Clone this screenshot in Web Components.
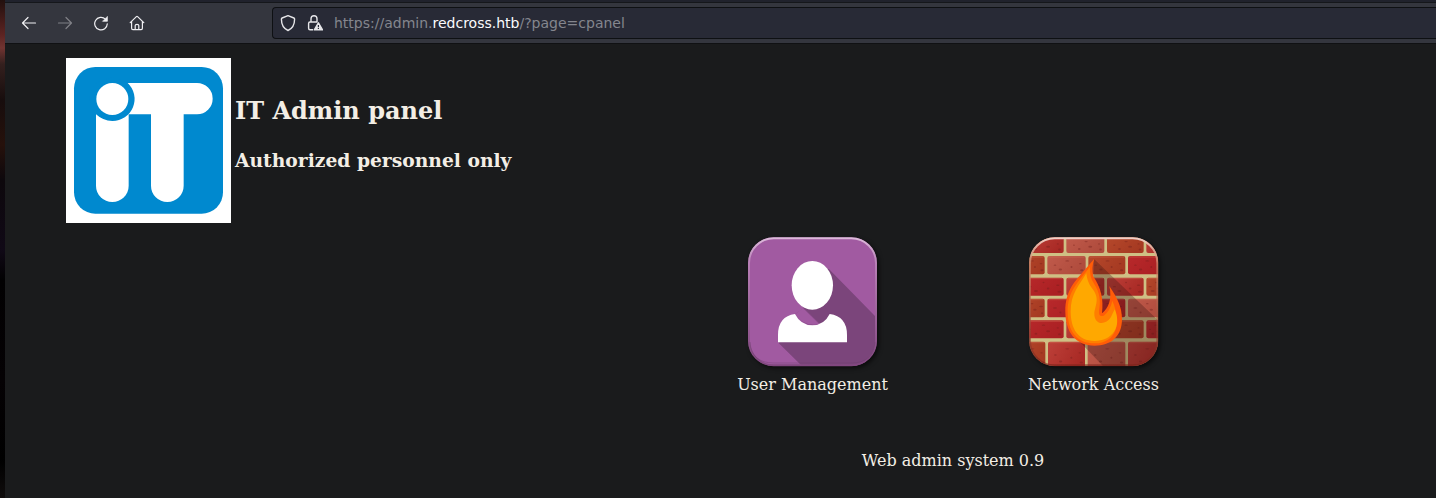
<!DOCTYPE html>
<html lang="en">
<head>
<meta charset="utf-8">
<title>IT Admin panel</title>
<style>
html,body{margin:0;height:100%;background:#1a1b1c;overflow:hidden}
</style>
</head>
<body>
<admin-window></admin-window>
<script>
const define = (name, html) => customElements.define(name, class extends HTMLElement {
  constructor() {
    super();
    const t = document.createElement('template');
    t.innerHTML = html;
    this.attachShadow({mode: 'open'}).append(t.content.cloneNode(true));
  }
});

define('nav-icons', `
<style>
:host{display:flex;gap:20px;width:251px;padding-left:16px;flex:none;align-items:center;box-sizing:content-box}
svg{width:16px;height:16px;flex:none;fill:none;stroke:#f0f0f3;stroke-width:1.2;stroke-linecap:round;stroke-linejoin:round}
.off{opacity:.4}
</style>
<svg viewBox="0 0 16 16"><path d="M7 2.5 1.5 8 7 13.5M1.7 8H14.5"/></svg>
<svg class="off" viewBox="0 0 16 16"><path d="M9 2.5 14.5 8 9 13.5M14.3 8H1.5"/></svg>
<svg viewBox="0 0 16 16"><path d="M12.4 4.1A6.3 6.3 0 1 0 14.3 8.8"/><path d="M14.4 1.8V6.3H9.9Z" fill="#f0f0f3" stroke-width=".7"/></svg>
<svg viewBox="0 0 16 16"><path d="M1.2 7.6 7.4 1.6Q8 1.1 8.6 1.6L14.8 7.6M2.6 6.6V13.3Q2.6 14.6 3.9 14.6H12.1Q13.4 14.6 13.4 13.3V6.6M6.2 14.4V10.6Q6.2 9.3 8 9.3T9.8 10.6V14.4"/></svg>
`);

define('address-field', `
<style>
:host{display:flex;flex:1;height:30px;align-items:center;background:#282a36;border:1px solid #0e1013;border-right:0;border-radius:4px 0 0 4px;padding-left:7px;font:14px/20px "DejaVu Sans",sans-serif;color:#84868e;white-space:pre}
svg{width:16px;height:18px;margin-right:11px;flex:none;fill:none;stroke:#e6e6e9;stroke-width:1.4;stroke-linejoin:round}
svg+svg{margin-right:11px}
b{font-weight:400;color:#fbfbfe}
</style>
<svg viewBox="0 0 16 18"><path d="M8 1.6 13.9 4Q14.6 4.3 14.6 5.1C14.6 11 12.3 14.7 8 16.5 3.7 14.7 1.4 11 1.4 5.1Q1.4 4.3 2.1 4Z"/></svg>
<svg viewBox="0 0 16 18"><path d="M4 8V4.8Q4 1.7 7 1.7T10 4.8V8M6 15.7H3Q1.6 15.7 1.6 14.2V9.5Q1.6 8 3 8H10.5"/><path d="M11.4 8.8 7.3 15.9H15.5Z" fill="#e6e6e9"/><path d="M11.4 11V13.2M11.4 14.1V15.1" stroke="#282a36" stroke-width="1.2"/></svg>
<span>https://admin.<b>redcross.htb</b>/?page=cpanel</span>
`);

define('browser-bar', `
<style>
:host{display:flex;box-sizing:border-box;height:44px;padding-top:4px;align-items:center;padding-bottom:2px;background:linear-gradient(#20222c 0 2px,#15171b 2px 3px,#34363e 3px 43px,#101113 43px)}
</style>
<nav-icons></nav-icons><address-field></address-field>
`);

define('it-logo', `
<style>:host{display:block;width:165px;height:165px;background:#fff;flex:none}svg{display:block}</style>
<svg width="165" height="165" viewBox="18 24 495 495">
<rect x="42" y="51" width="447" height="440" rx="64" fill="#0089cf"/>
<g fill="#fff">
<path d="M180 99H411A47 47 0 0 1 411 193H371V407A49 49 0 0 1 273 407V193H180Z"/>
<path d="M108 180H206V407A49 49 0 0 1 108 407Z"/></g>
<path d="M108 193 A67 67 0 0 1 108 100 L157 80 203 99 A66 66 0 0 1 157 213 Q128 212 108 193Z" fill="#0089cf"/>
<circle cx="157" cy="147" r="48" fill="#fff"/>
</svg>
`);

define('page-heading', `
<style>
:host{display:flex;gap:4px;padding:14px 0 0 61px;height:165px}
h1,h2{margin:0;font-weight:700;white-space:nowrap}
h1{font-size:24px;line-height:28px;margin-top:39px}
h2{font-size:18.72px;line-height:22px;margin-top:24px}
</style>
<it-logo></it-logo><div><h1><slot name="title"></slot></h1><h2><slot name="subtitle"></slot></h2></div>
`);

define('menu-tile', `
<style>
:host{display:block;width:281px;text-align:center;font-size:16px;line-height:19px}
.icon{height:140px;margin-left:70px;width:140px}
.label{margin-top:5px}
</style>
<div class="icon"><slot name="icon"></slot></div><div class="label"><slot></slot></div>
`);

define('user-icon', `
<style>:host,svg{display:block}svg{filter:drop-shadow(2px 2px 2px #0009)}</style>
<svg width="140" height="140" viewBox="36 -1 420 420">
<defs><clipPath id="c"><rect x="55" y="21" width="385" height="386" rx="76"/></clipPath>
<linearGradient id="e" x1="0" y1="0" x2="0" y2="1"><stop stop-color="#dcb9da"/><stop offset=".2" stop-color="#b77fb5"/><stop offset="1" stop-color="#81477f"/></linearGradient></defs>
<g clip-path="url(#c)">
<rect x="55" y="21" width="385" height="386" fill="#a15aa1"/>
<path d="M296 115 440 262V407H216L145 337 270 280 215 226Z" fill="#7b457b"/>
<path d="M222 233 268 279Q240 290 219 275L196 251Z" fill="#7b457b"/>
<path d="M196 251 219 233 268 281Q222 292 196 251Z" fill="#a15aa1"/>
<path d="M222 233 268 279Q286 273 298 251L280 220Z" fill="#7b457b"/>
</g>
<rect x="57" y="24" width="381" height="381" rx="74" fill="none" stroke="url(#e)" stroke-width="6"/>
<path d="M60 335Q64 398 132 398H364Q430 398 435 335" fill="none" stroke="#693c69" stroke-opacity=".4" stroke-width="3"/>
<ellipse cx="247" cy="165" rx="62" ry="73" fill="#fff"/>
<path d="M144 336V314Q144 258 195 251Q212 285 247 285T299 251Q351 258 351 314V336Z" fill="#fff"/>
</svg>
`);

/* Brick courses: top, height, then x positions of the brick edges. */
const courses = [
  [21, 47, [20, 146, 268, 386, 450]], [77, 55, [10, 89, 212, 331, 450]],
  [142, 54, [20, 146, 268, 386, 450]], [205, 56, [10, 89, 212, 331, 450]],
  [270, 54, [20, 146, 268, 386, 450]], [334, 80, [10, 91, 210, 331, 450]]
];
const tones = [
  ['b','p','o','b'], ['o','p','o','r'], ['r','b','b','o'],
  ['o','r','r','p'], ['r','b','o','r'], ['o','b','p','b']
];
let bricks = '', specks = '';
courses.forEach(([y, h, xs], r) => {
  for (let i = 0; i < xs.length - 1; i++) {
    const x = xs[i] + (i ? 8 : 0), w = xs[i + 1] - x;
    bricks += `<rect x="${x}" y="${y}" width="${w}" height="${h}" rx="6" fill="url(#${tones[r][i]})"/>`;
    bricks += `<path d="M${x + 4} ${y + 3}h${w - 8}" stroke="#df8467" stroke-opacity=".5" stroke-width="2"/>`;
    [[.2,.5],[.34,.74],[.52,.27],[.63,.6],[.86,.42],[.9,.78]].forEach(([a, b], k) => {
      specks += `<ellipse cx="${x + w * a}" cy="${y + h * b}" rx="${3 + (k + r) % 4}" ry="${2 + k % 2}"/>`;
    });
  }
});
define('firewall-icon', `
<style>:host,svg{display:block}svg{filter:drop-shadow(2px 2px 2px #0009)}</style>
<svg width="140" height="140" viewBox="24 -1 420 420">
<defs><clipPath id="c"><rect x="43" y="21" width="386" height="386" rx="76"/></clipPath>
<linearGradient id="r" x2="1" y2=".5"><stop stop-color="#b8292b"/><stop offset="1" stop-color="#ab2023"/></linearGradient>
<linearGradient id="b" x2="1" y2=".4"><stop stop-color="#bd4039"/><stop offset="1" stop-color="#a92a25"/></linearGradient>
<linearGradient id="o" x2="1" y2=".4"><stop stop-color="#b5482b"/><stop offset="1" stop-color="#a63a22"/></linearGradient>
<linearGradient id="p" x2="1" y2=".4"><stop stop-color="#c05a4b"/><stop offset="1" stop-color="#b04c3d"/></linearGradient>
<linearGradient id="e" x1="0" y1="0" x2="0" y2="1"><stop stop-color="#f0cfc6"/><stop offset=".2" stop-color="#d18e70" stop-opacity=".7"/><stop offset="1" stop-color="#782018" stop-opacity=".6"/></linearGradient></defs>
<g clip-path="url(#c)"><rect x="43" y="21" width="386" height="386" fill="#cfc084"/>
${bricks}<g fill="#701f1b" fill-opacity=".4">${specks}</g>
<path d="M237 86 429 270V407H264L190 330 230 270Z" fill="#3b1713" fill-opacity=".32"/></g>
<rect x="45" y="24" width="382" height="381" rx="74" fill="none" stroke="url(#e)" stroke-width="6"/>
<path d="M238 85Q228 112 235 138C258 174 266 205 261 249C280 234 292 207 283 167C306 202 321 229 321 266C321 320 286 346 239 346C181 346 151 303 151 244C151 179 181 152 209 119Q224 101 238 85Z" fill="#ff5c08"/>
<path d="M225 109Q223 138 236 158C256 188 257 214 252 241Q250 261 266 256Q286 241 292 211C322 280 304 338 239 339C186 339 158 302 158 244C158 181 190 155 225 109Z" fill="#ff7e00"/>
<path d="M214 129Q216 155 231 174C255 203 242 223 238 247C236 283 270 288 288 260Q296 243 299 237C322 290 291 332 239 332C188 332 167 294 167 243C167 190 192 166 214 129Z" fill="#ffa800"/>
</svg>
`);

define('admin-window', `
<style>
:host{display:flex;height:498px;background:#1a1b1c;color:#f3eee5;font-family:"DejaVu Serif",serif}
.desktop{width:5px;flex:none;background:linear-gradient(#22100e,#5d2422 35px,#713431 48px,#34201e 64px,#170d0d 100px,#26110b 145px,#0d080c 180px,#100916 250px,#020102 280px,#050204 380px,#000 460px,#100d0d)}
main{flex:1;min-width:0}
.menu{display:flex;padding:7px 0 0 667px}
footer{width:562px;margin:57px 0 0 667px;text-align:center;font-size:16px;line-height:19px}
</style>
<div class="desktop"></div>
<main><browser-bar></browser-bar>
<page-heading><span slot="title">IT Admin panel</span><span slot="subtitle">Authorized personnel only</span></page-heading>
<div class="menu"><menu-tile><user-icon slot="icon"></user-icon>User Management</menu-tile><menu-tile><firewall-icon slot="icon"></firewall-icon>Network Access</menu-tile></div>
<footer>Web admin system 0.9</footer></main>
`);
</script>
</body>
</html>
